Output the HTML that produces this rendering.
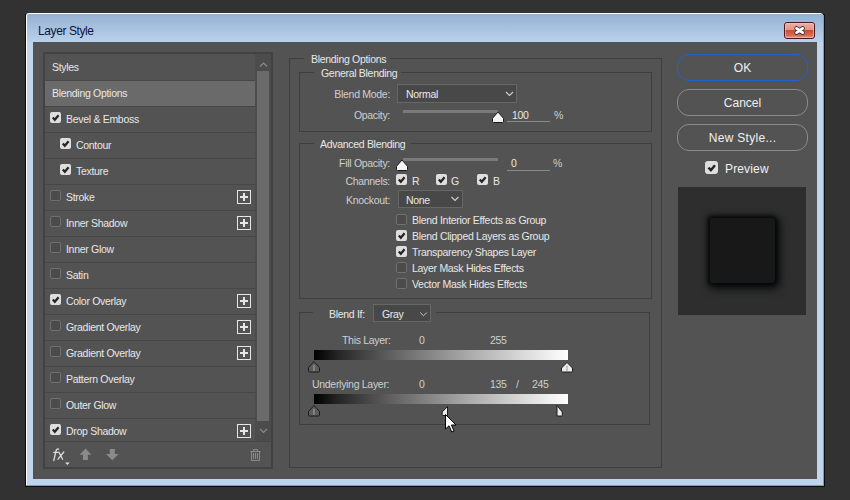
<!DOCTYPE html>
<html><head><meta charset="utf-8">
<style>
*{margin:0;padding:0;box-sizing:border-box}
html,body{width:850px;height:500px;overflow:hidden;background:#323232;font-family:"Liberation Sans",sans-serif}
.a{position:absolute}
.t{position:absolute;white-space:nowrap;font-size:10.5px;letter-spacing:-0.3px;line-height:12px;color:#e8e8e8}
.lb{color:#cfcfcf}
.sep{position:absolute;left:45px;width:210px;height:1px;background:#474747}
.cb{position:absolute;width:11px;height:11px;border-radius:2px;background:#4b4b4b;border:1px solid #707070}
.cbc{position:absolute;width:11px;height:11px;border-radius:2px;background:#dedede}
.cbc svg{position:absolute;left:0;top:0}
.plus{position:absolute;left:237px;width:14px;height:14px;border:1px solid #e6e6e6}
.plus:before{content:"";position:absolute;left:2px;top:5px;width:8px;height:2px;background:#e6e6e6}
.plus:after{content:"";position:absolute;left:5px;top:2px;width:2px;height:8px;background:#e6e6e6}
.gb{position:absolute;border:1px solid #3f3f3f}
.gap{position:absolute;height:3px;background:#535353}
.dd{position:absolute;border:1px solid #666;background:#484848}
.btn{position:absolute;left:677px;width:131px;height:27px;border:1px solid #8c8c8c;border-radius:12px;color:#f0f0f0;font-size:12px;text-align:center;line-height:27px}
</style></head><body>
<!-- window frame -->
<div class="a" style="left:25px;top:14px;width:800px;height:473px;background:#0c0c0c"></div>
<div class="a" style="left:26px;top:15px;width:798px;height:471px;background:#22c4ee"></div>
<div class="a" style="left:26px;top:13px;width:797px;height:472px;background:#fff;border-radius:3px 3px 0 0"></div>
<div class="a" style="left:27px;top:14px;width:796px;height:471px;background:#c0d5ed;border-radius:2px 2px 0 0"></div>
<div class="a" style="left:27px;top:14px;width:796px;height:28px;background:linear-gradient(#95b1d2,#bad1eb);border-radius:2px 2px 0 0"></div>
<div class="t" style="left:38px;top:24px;font-size:12px;letter-spacing:-0.4px;line-height:14px;color:#10143a">Layer Style</div>
<!-- close button -->
<svg class="a" style="left:784px;top:22px" width="31" height="17">
<defs><linearGradient id="cg" x1="0" y1="0" x2="0" y2="1">
<stop offset="0" stop-color="#eeb3a6"/><stop offset="0.45" stop-color="#e39484"/><stop offset="0.47" stop-color="#cc4a30"/><stop offset="0.8" stop-color="#d66a52"/><stop offset="1" stop-color="#e8a08e"/></linearGradient></defs>
<rect x="0.5" y="0.5" width="30" height="16" rx="2.5" fill="url(#cg)" stroke="#4a1620"/>
<rect x="1.5" y="1.5" width="28" height="14" rx="1.5" fill="none" stroke="#f6c4ba" stroke-opacity="0.6"/>
<path d="M12.6 6.4 L18.6 10.6 M18.6 6.4 L12.6 10.6" stroke="#3c3c3c" stroke-width="4.6" stroke-linecap="round"/>
<path d="M12.6 6.4 L18.6 10.6 M18.6 6.4 L12.6 10.6" stroke="#ffffff" stroke-width="2.8" stroke-linecap="round"/>
</svg>

<!-- content -->
<div class="a" style="left:33px;top:42px;width:784px;height:437px;background:#535353"></div>

<!-- left panel -->
<div class="a" style="left:43px;top:52px;width:230px;height:417px;border:2px solid #424242;box-shadow:0 0 0 0 #000,inset 0 0 0 0 #000;outline:0"></div>
<div class="a" style="left:45px;top:81px;width:210px;height:25px;background:#6a6a6a"></div>
<!-- scrollbar -->
<div class="a" style="left:255px;top:54px;width:16px;height:387px;background:#4c4c4c"></div>
<div class="a" style="left:257px;top:71px;width:12px;height:350px;background:#6a6a6a"></div>
<svg class="a" style="left:255px;top:54px" width="17" height="387"><path d="M9.5 12.5 L13 9 L16.5 12.5" transform="translate(-4.5,0)" stroke="#8a8a8a" stroke-width="1.2" fill="none"/><path d="M5 375 L8.5 378.5 L12 375" stroke="#8a8a8a" stroke-width="1.2" fill="none"/></svg>

<div class="sep" style="top:80px"></div>
<div class="sep" style="top:106px"></div>
<div class="sep" style="top:132px"></div>
<div class="sep" style="top:158px"></div>
<div class="sep" style="top:184px"></div>
<div class="sep" style="top:210px"></div>
<div class="sep" style="top:236px"></div>
<div class="sep" style="top:262px"></div>
<div class="sep" style="top:288px"></div>
<div class="sep" style="top:314px"></div>
<div class="sep" style="top:340px"></div>
<div class="sep" style="top:366px"></div>
<div class="sep" style="top:392px"></div>
<div class="sep" style="top:418px"></div>
<div class="a" style="left:45px;top:441px;width:226px;height:1px;background:#474747"></div>

<div class="t" style="left:52px;top:61px">Styles</div>
<div class="t" style="left:52px;top:87px">Blending Options</div>
<div class="cbc" style="left:50px;top:112px"><svg width="11" height="11"><path d="M2.8 5.6 L4.8 7.8 L8.6 3.2" stroke="#242424" stroke-width="2.2" fill="none"/></svg></div>
<div class="t" style="left:66px;top:113px">Bevel &amp; Emboss</div>
<div class="cbc" style="left:60px;top:138px"><svg width="11" height="11"><path d="M2.8 5.6 L4.8 7.8 L8.6 3.2" stroke="#242424" stroke-width="2.2" fill="none"/></svg></div>
<div class="t" style="left:76px;top:139px">Contour</div>
<div class="cbc" style="left:60px;top:164px"><svg width="11" height="11"><path d="M2.8 5.6 L4.8 7.8 L8.6 3.2" stroke="#242424" stroke-width="2.2" fill="none"/></svg></div>
<div class="t" style="left:76px;top:165px">Texture</div>
<div class="cb" style="left:50px;top:190px"></div>
<div class="t" style="left:66px;top:191px">Stroke</div>
<div class="plus" style="top:190px"></div>
<div class="cb" style="left:50px;top:216px"></div>
<div class="t" style="left:66px;top:217px">Inner Shadow</div>
<div class="plus" style="top:216px"></div>
<div class="cb" style="left:50px;top:242px"></div>
<div class="t" style="left:66px;top:243px">Inner Glow</div>
<div class="cb" style="left:50px;top:268px"></div>
<div class="t" style="left:66px;top:269px">Satin</div>
<div class="cbc" style="left:50px;top:294px"><svg width="11" height="11"><path d="M2.8 5.6 L4.8 7.8 L8.6 3.2" stroke="#242424" stroke-width="2.2" fill="none"/></svg></div>
<div class="t" style="left:66px;top:295px">Color Overlay</div>
<div class="plus" style="top:294px"></div>
<div class="cb" style="left:50px;top:320px"></div>
<div class="t" style="left:66px;top:321px">Gradient Overlay</div>
<div class="plus" style="top:320px"></div>
<div class="cb" style="left:50px;top:346px"></div>
<div class="t" style="left:66px;top:347px">Gradient Overlay</div>
<div class="plus" style="top:346px"></div>
<div class="cb" style="left:50px;top:372px"></div>
<div class="t" style="left:66px;top:373px">Pattern Overlay</div>
<div class="cb" style="left:50px;top:398px"></div>
<div class="t" style="left:66px;top:399px">Outer Glow</div>
<div class="cbc" style="left:50px;top:424px"><svg width="11" height="11"><path d="M2.8 5.6 L4.8 7.8 L8.6 3.2" stroke="#242424" stroke-width="2.2" fill="none"/></svg></div>
<div class="t" style="left:66px;top:425px">Drop Shadow</div>
<div class="plus" style="top:424px"></div>

<!-- footer icons -->
<svg class="a" style="left:46px;top:442px" width="30" height="26"><g fill="none" stroke="#dcdcdc" stroke-width="1.3" stroke-linecap="round"><path d="M12.6 7.2 Q10.6 6.4 10 9 L7.8 18.6"/><path d="M7.8 10.4 H11.8"/><path d="M12.8 10 L16.6 17.2 M17.8 10 L12 17.2"/></g></svg>
<svg class="a" style="left:40px;top:440px" width="240" height="28">
<path d="M25.2 22.6 L29.6 22.6 L27.4 25 Z" fill="#e8e8e8"/>
<path d="M45.5 8.6 L51.4 14.8 L47.9 14.8 L47.9 20 L42.9 20 L42.9 14.8 L39.6 14.8 Z" fill="#8a8a8a"/>
<path d="M69.8 9 L74.8 9 L74.8 14 L78.6 14 L72.3 20.2 L66 14 L69.8 14 Z" fill="#8a8a8a"/>
<g fill="none" stroke="#8a8a8a" stroke-width="1"><path d="M210.5 11.5 H220.5 M213.5 11.5 V9.5 H217.5 V11.5 M211.5 11.5 V20.5 H219.5 V11.5 M213.5 13 V19 M215.5 13 V19 M217.5 13 V19"/></g>
</svg>

<!-- right: Blending options groups -->
<div class="gb" style="left:289px;top:58px;width:373px;height:410px"></div>
<div class="gap" style="left:304px;top:57px;width:86px"></div>
<div class="t" style="left:311px;top:53px">Blending Options</div>

<div class="gb" style="left:299px;top:72px;width:353px;height:60px"></div>
<div class="gap" style="left:314px;top:71px;width:87px"></div>
<div class="t" style="left:321px;top:67px">General Blending</div>
<div class="t lb" style="left:290px;top:88px;width:100px;text-align:right">Blend Mode:</div>
<div class="dd" style="left:397px;top:84px;width:120px;height:19px"></div>
<div class="t" style="left:406px;top:88px">Normal</div>
<svg class="a" style="left:500px;top:86px" width="16" height="14"><path d="M6 6 L9.5 9.5 L13 6" stroke="#d0d0d0" stroke-width="1.1" fill="none"/></svg>
<div class="t lb" style="left:290px;top:109px;width:100px;text-align:right">Opacity:</div>
<div class="a" style="left:403px;top:110px;width:95px;height:3px;background:#7a7a7a"></div>
<svg class="a" style="left:490px;top:110px" width="16" height="14"><path d="M8 2 L13.5 8.3 L13.5 11.5 Q13.5 12.5 12.5 12.5 L3.5 12.5 Q2.5 12.5 2.5 11.5 L2.5 8.3 Z" fill="#f4f4f4" stroke="#1a1a1a" stroke-width="1" stroke-linejoin="round"/></svg>
<div class="t" style="left:512px;top:109px">100</div>
<div class="a" style="left:507px;top:121px;width:43px;height:1px;background:#8a8a8a"></div>
<div class="t lb" style="left:554px;top:109px">%</div>

<div class="gb" style="left:299px;top:143px;width:353px;height:156px"></div>
<div class="gap" style="left:314px;top:142px;width:96px"></div>
<div class="t" style="left:320px;top:138px">Advanced Blending</div>
<div class="t lb" style="left:290px;top:157px;width:100px;text-align:right">Fill Opacity:</div>
<div class="a" style="left:403px;top:158px;width:95px;height:3px;background:#7a7a7a"></div>
<svg class="a" style="left:394px;top:159px" width="16" height="14"><path d="M8 1 L13.5 7.3 L13.5 10.5 Q13.5 11.5 12.5 11.5 L3.5 11.5 Q2.5 11.5 2.5 10.5 L2.5 7.3 Z" fill="#f4f4f4" stroke="#1a1a1a" stroke-width="1" stroke-linejoin="round"/></svg>
<div class="t" style="left:511px;top:157px">0</div>
<div class="a" style="left:507px;top:170px;width:43px;height:1px;background:#8a8a8a"></div>
<div class="t lb" style="left:553px;top:157px">%</div>

<div class="t lb" style="left:290px;top:175px;width:100px;text-align:right">Channels:</div>
<div class="cbc" style="left:396px;top:174px"><svg width="11" height="11"><path d="M2.8 5.6 L4.8 7.8 L8.6 3.2" stroke="#242424" stroke-width="2.2" fill="none"/></svg></div>
<div class="t" style="left:412px;top:175px">R</div>
<div class="cbc" style="left:436px;top:174px"><svg width="11" height="11"><path d="M2.8 5.6 L4.8 7.8 L8.6 3.2" stroke="#242424" stroke-width="2.2" fill="none"/></svg></div>
<div class="t" style="left:451px;top:175px">G</div>
<div class="cbc" style="left:477px;top:174px"><svg width="11" height="11"><path d="M2.8 5.6 L4.8 7.8 L8.6 3.2" stroke="#242424" stroke-width="2.2" fill="none"/></svg></div>
<div class="t" style="left:493px;top:175px">B</div>

<div class="t lb" style="left:290px;top:194px;width:100px;text-align:right">Knockout:</div>
<div class="dd" style="left:398px;top:190px;width:65px;height:18px"></div>
<div class="t" style="left:406px;top:194px">None</div>
<svg class="a" style="left:446px;top:192px" width="16" height="14"><path d="M5.5 5 L9 8.5 L12.5 5" stroke="#d0d0d0" stroke-width="1.1" fill="none"/></svg>

<div class="cb" style="left:396px;top:214px"></div>
<div class="t" style="left:412px;top:214px">Blend Interior Effects as Group</div>
<div class="cbc" style="left:396px;top:230px"><svg width="11" height="11"><path d="M2.8 5.6 L4.8 7.8 L8.6 3.2" stroke="#242424" stroke-width="2.2" fill="none"/></svg></div>
<div class="t" style="left:412px;top:230px">Blend Clipped Layers as Group</div>
<div class="cbc" style="left:396px;top:246px"><svg width="11" height="11"><path d="M2.8 5.6 L4.8 7.8 L8.6 3.2" stroke="#242424" stroke-width="2.2" fill="none"/></svg></div>
<div class="t" style="left:412px;top:246px">Transparency Shapes Layer</div>
<div class="cb" style="left:396px;top:262px"></div>
<div class="t" style="left:412px;top:262px">Layer Mask Hides Effects</div>
<div class="cb" style="left:396px;top:278px"></div>
<div class="t" style="left:412px;top:278px">Vector Mask Hides Effects</div>

<!-- blend if -->
<div class="gb" style="left:299px;top:312px;width:351px;height:113px"></div>
<div class="gap" style="left:313px;top:304px;width:123px;height:20px"></div>
<div class="t" style="left:329px;top:308px">Blend If:</div>
<div class="dd" style="left:373px;top:304px;width:58px;height:18px"></div>
<div class="t" style="left:382px;top:308px">Gray</div>
<svg class="a" style="left:414px;top:307px" width="16" height="14"><path d="M6.2 5.5 L9.5 8.8 L12.8 5.5" stroke="#c8c8c8" stroke-width="1" fill="none"/></svg>

<div class="t lb" style="left:342px;top:334px">This Layer:</div>
<div class="t lb" style="left:419px;top:334px">0</div>
<div class="t lb" style="left:490px;top:334px">255</div>
<div class="a" style="left:314px;top:350px;width:254px;height:10px;background:linear-gradient(90deg,#000000 0%,#272727 10%,#444444 20%,#5f5f5f 30%,#787878 40%,#909090 50%,#a8a8a8 60%,#bebebe 70%,#d4d4d4 80%,#eaeaea 90%,#ffffff 100%)"></div>
<div class="t lb" style="left:312px;top:378px">Underlying Layer:</div>
<div class="t lb" style="left:419px;top:378px">0</div>
<div class="t lb" style="left:490px;top:378px">135</div>
<div class="t lb" style="left:516px;top:378px">/</div>
<div class="t lb" style="left:532px;top:378px">245</div>
<div class="a" style="left:314px;top:394px;width:254px;height:10px;background:linear-gradient(90deg,#000000 0%,#272727 10%,#444444 20%,#5f5f5f 30%,#787878 40%,#909090 50%,#a8a8a8 60%,#bebebe 70%,#d4d4d4 80%,#eaeaea 90%,#ffffff 100%)"></div>
<svg class="a" style="left:300px;top:360px" width="280" height="80">
 <g stroke="#1c1c1c" stroke-width="1">
  <path d="M14 1.5 L19.5 7.5 L19.5 11 Q19.5 12 18.5 12 L9.5 12 Q8.5 12 8.5 11 L8.5 7.5 Z" fill="#5c5c5c"/>
  <path d="M267 2.5 L272.5 8 L272.5 11 Q272.5 12 271.5 12 L262.5 12 Q261.5 12 261.5 11 L261.5 8 Z" fill="#ececec"/>
  <path d="M14 45.5 L19.5 51.5 L19.5 55 Q19.5 56 18.5 56 L9.5 56 Q8.5 56 8.5 55 L8.5 51.5 Z" fill="#5c5c5c"/>
  <path d="M147.5 46.5 L147.5 55.5 L143 55.5 Q142.2 55.5 142.2 54.5 L142.2 52 Z" fill="#ececec"/>
  <path d="M257 45.5 L257 56 L261.5 56 Q262.3 56 262.3 55 L262.3 52 Z" fill="#ececec"/>
 </g>
 <g stroke="#9a9a9a" stroke-width="1.2"><path d="M14 5 V11"/><path d="M14 49 V55"/></g>
 <g stroke="#a8a8a8" stroke-width="1.2"><path d="M267 5.5 V11"/></g>
</svg>
<!-- cursor -->
<svg class="a" style="left:444px;top:413px" width="14" height="21"><path d="M1.5 1.5 L1.5 16 L5 12.8 L7.8 19 L10 18 L7.4 12 L12 12 Z" fill="#fff" stroke="#000" stroke-width="1" stroke-linejoin="round"/></svg>

<!-- buttons -->
<div class="btn" style="top:54px;border:1.5px solid #2460d4;line-height:26px">OK</div>
<div class="btn" style="top:89px">Cancel</div>
<div class="btn" style="top:124px;letter-spacing:0.3px">New Style...</div>
<div class="cbc" style="left:705px;top:161px;width:13px;height:13px;border-radius:3px"><svg width="13" height="13"><path d="M3.4 6.6 L5.9 9.1 L10 4.2" stroke="#242424" stroke-width="2.4" fill="none"/></svg></div>
<div class="t" style="left:725px;top:162px;font-size:12px;letter-spacing:0.15px;line-height:14px;color:#f0f0f0">Preview</div>

<!-- preview -->
<div class="a" style="left:678px;top:187px;width:128px;height:128px;background:#2e2e2e;overflow:hidden">
 <div class="a" style="left:32px;top:31px;width:65px;height:65px;background:#181818;border-radius:1px 3px 4px 2px;box-shadow:0 0 4px 2px rgba(2,4,6,0.9),2px 3px 9px 3px rgba(2,4,6,0.75)"></div>
</div>
</body></html>
